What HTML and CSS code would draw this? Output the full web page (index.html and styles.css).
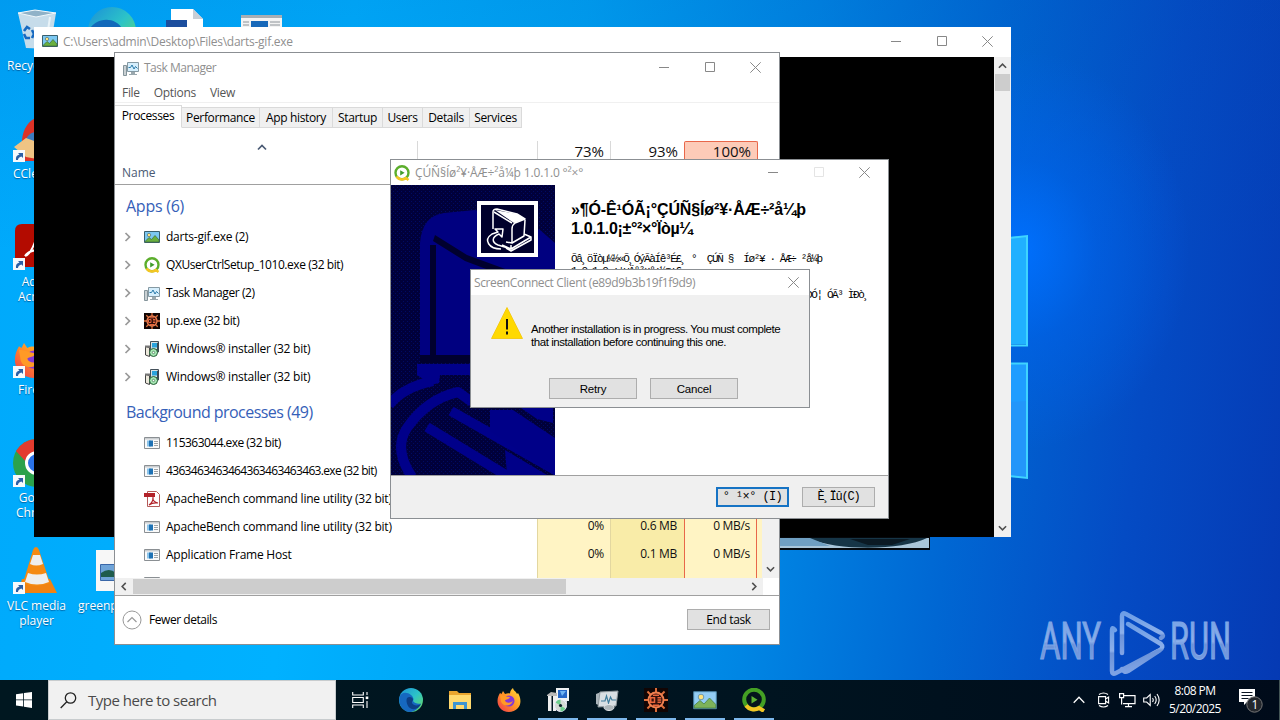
FILE: index.html
```html
<!DOCTYPE html>
<html lang="en">
<head>
<meta charset="utf-8">
<title>Desktop</title>
<link rel="stylesheet" href="styles.css">
</head>
<body>
<svg class="defs" width="0" height="0" aria-hidden="true">
  <defs>
    <linearGradient id="edgeg" x1="0" y1="0" x2="1" y2="1"><stop offset="0" stop-color="#1b8fd8"/><stop offset=".5" stop-color="#2cc3c8"/><stop offset="1" stop-color="#6fdc5a"/></linearGradient>
    <linearGradient id="ffg" x1="1" y1="0" x2="0" y2="1"><stop offset="0" stop-color="#ffe23b"/><stop offset=".5" stop-color="#ff9326"/><stop offset="1" stop-color="#f0314f"/></linearGradient>
    <linearGradient id="wmg" x1="0" y1="0" x2="0" y2="1"><stop offset="0" stop-color="#6d9ee6"/><stop offset=".5" stop-color="#8db0ea"/><stop offset=".55" stop-color="#6c93d9"/><stop offset="1" stop-color="#7fa3e4"/></linearGradient>
    <pattern id="dots" width="4" height="4" patternUnits="userSpaceOnUse"><rect width="4" height="4" fill="#00003a"/><rect width="1" height="1" fill="#000a62"/><rect x="2" y="2" width="1" height="1" fill="#000a62"/></pattern>
  </defs>
  <symbol id="i-pic" viewBox="0 0 16 16"><path d="M.5 2.500h15v11H.5z" fill="#7cc8f2" stroke="#39606f"/><circle cx="5" cy="6" r="1.700" fill="#ffe27a" stroke="#4c7180" stroke-width=".7"/><path d="M1 12.500l4-4 2.500 2L11 6.500l4 4.500v2H1z" fill="#69b03f" stroke="#3f6b3a" stroke-width=".7"/></symbol>
  <symbol id="i-pict" viewBox="0 0 24 24"><path d="M.7 3.700h22.600v17H.7z" fill="#93cdf4" stroke="#4d86a6" stroke-width="1"/><circle cx="8" cy="9" r="2.800" fill="#ffe27a" stroke="#6d98ac"/><path d="M1.200 20v-2.500L7 12.500l4 3.500 5.500-6 6.300 6.500V20z" fill="#7db35a" stroke="#4a8040" stroke-width=".8"/></symbol>
  <symbol id="i-q" viewBox="0 0 16 16"><circle cx="8" cy="7.800" r="6.500" fill="#fff" stroke="#5cae2c" stroke-width="2.400"/><path d="M2.500 11.500A6.500 6.500 0 0 0 12 13l2.500 2" fill="none" stroke="#f3c623" stroke-width="2.500"/><path d="M6.200 5.200v5.200L10.600 7.800z" fill="#3f9c2c"/></symbol>
  <symbol id="i-qt" viewBox="0 0 24 24"><circle cx="12" cy="11.500" r="9.800" fill="#04151c" stroke="#44a024" stroke-width="4"/><path d="M4 17.500A10 10 0 0 0 17 20l5 3" fill="none" stroke="#f3c623" stroke-width="4"/><path d="M9.500 8v7.500l6-3.700z" fill="#5cb332"/></symbol>
  <symbol id="i-tm" viewBox="0 0 16 16"><path d="M.5 5.500h3v10h-3z" fill="#c9d0d3" stroke="#84949b"/><path d="M4.500 2.500h11v9h-11z" fill="#d5eefc" stroke="#8599a3"/><path d="M5.500 7.500h2l1.500-2.500 2 4 1.500-2.500 2 2" fill="none" stroke="#2979a8"/><path d="M8 12h4v2h2v1H6v-1h2z" fill="#9aa8ae"/></symbol>
  <symbol id="i-up" viewBox="0 0 16 16"><path d="M0 0h16v16H0z" fill="#120504"/><path d="M8 0v16M0 8h16M2.300 2.300l11.400 11.400M13.700 2.300L2.300 13.700" stroke="#e0703c" stroke-width="1.300"/><circle cx="8" cy="8" r="5" fill="#32100b" stroke="#f08050" stroke-width="1.300"/><path d="M4.500 6.500h2.500v3H4.500zM9 6.500h2.500M9 8h2.500M9 9.500h2.500M6 11.500h4M6 4.800h4" fill="none" stroke="#e8653c" stroke-width="1"/></symbol>
  <symbol id="i-msi" viewBox="0 0 16 16"><path d="M6.500.5h8v8h-8z" fill="#d9e2e4" stroke="#44515a"/><path d="M8 2h5v4.500H8z" fill="#2aa3dc"/><path d="M13 2l2-1v10l-2 1z" fill="#3a4852"/><path d="M1.500 5.500l4 1v9l-4-1.500z" fill="#ede9dc" stroke="#444"/><path d="M1 4.500h5v2H1z" fill="#777"/><circle cx="9.500" cy="11.500" r="4" fill="#a6e8b4" stroke="#245c33"/><circle cx="9.500" cy="11.500" r="1.200" fill="#fff" stroke="#245c33" stroke-width=".6"/></symbol>
  <symbol id="i-msit" viewBox="0 0 24 24"><path d="M10 0h13v13H10z" fill="#eef1f2"/><path d="M12 2h9v8h-9z" fill="#2668c8"/><path d="M14 3h6l-4 5z" fill="#6fb4f2"/><path d="M12 13h9v3h-9z" fill="#cfd4d7"/><path d="M1 7l4-3 6 1v3H1z" fill="#b9b9b9"/><path d="M2 8h3.500v15H2zM7 8h3v15H7z" fill="#efefef"/><circle cx="14.500" cy="17.500" r="6" fill="#d5dbd6" stroke="#eef"/><path d="M14.500 17.500l-5-3a6 6 0 0 1 5-3zM14.500 17.500l5 3a6 6 0 0 1-5 3z" fill="#6fcf8e"/><circle cx="14.500" cy="17.500" r="1.600" fill="#10222a"/></symbol>
  <symbol id="i-app" viewBox="0 0 16 16"><path d="M.5 2.500h15v11H.5z" fill="#fafafa" stroke="#8a8f93"/><path d="M1 3h14v1.500H1z" fill="#c9cdd0"/><path d="M3 5.500h4v6H3z" fill="#8cc4ea"/><path d="M5 5.500h4v6H5z" fill="#1f72b4"/><path d="M10 6.500h4M10 8.500h4M10 10.500h4" stroke="#9ea4a8"/></symbol>
  <symbol id="i-pdf" viewBox="0 0 16 16"><path d="M3.500.5h9l3 3v12h-12z" fill="#fff" stroke="#b45a58"/><path d="M0 2h11v4H0z" fill="#b3222a"/><path d="M5 14c3-2 4.500-5.500 4-7.500-1 2 1.500 5 5 5.500-3-.5-7 .5-9 2z" fill="none" stroke="#b3222a" stroke-width="1.200"/></symbol>
  <symbol id="i-min" viewBox="0 0 11 11"><path d="M0 5.500h10" stroke="#888" fill="none"/></symbol>
  <symbol id="i-max" viewBox="0 0 11 11"><path d="M.5.5h9v9h-9z" stroke="currentColor" fill="none"/></symbol>
  <symbol id="i-x" viewBox="0 0 11 11"><path d="M.3.3l10.400 10.400M10.700.3L.3 10.700" stroke="#888" fill="none"/></symbol>
  <symbol id="i-chev" viewBox="0 0 8 8"><path d="M2 .8L5.200 4 2 7.200" fill="none" stroke="currentColor" stroke-width="1.400"/></symbol>
  <symbol id="i-link" viewBox="0 0 12 12"><path d="M0 0h12v12H0z" fill="#f6f9fc"/><path d="M3 10c-.5-3 .8-5 3.500-5.500L5 3h5v5L8.500 6.500C6.500 7 5 8 5 10z" fill="#2c5fa5"/></symbol>
  <symbol id="i-edge" viewBox="0 0 24 24"><circle cx="12" cy="12" r="12" fill="url(#edgeg)"/><path d="M.5 9C2 4 8 3.500 12 7c2.500 2.200 3 4 2 6 1.500 2.500 5 3 8 2.500C19 22 14 24 11 24 4 24-1 17 .5 9z" fill="#1668c0"/><path d="M8 10c2-2 6-1 6 1.500 0 1.500-1.500 2-1 3.500 1.500 3 6 3 9 1-3 7-11 6-13 2-1.500-3-2-6-1-8z" fill="#0c3f86"/></symbol>
  <symbol id="i-ff" viewBox="0 0 24 24"><path d="M3 5l1.500 1L6 3l2 3c2-1 4-1 5-.5C13 3 14.500 1 16 0c.5 3 3 3 4 6l1-1c3 5 3.500 11 0 15-5 5.500-14 5-18 0C-1 15 .5 9 3 5z" fill="url(#ffg)"/><circle cx="12" cy="13" r="5.500" fill="#8338d8"/><path d="M3 7c4 0 6 2 10 2-1 3-4 2-5 3.500 1 3 6 3 8 0-1 6-10 7-12 1z" fill="#ff9a26"/></symbol>
</svg>

<main class="desktop">
  <svg class="wallpaper" width="1280" height="720" viewBox="0 0 1280 720">
    <path d="M1011 237l16-1v108h-16z" fill="#20b0ff"/><path d="M1011 363h16v115l-16-2z" fill="#1f9dff"/><path d="M1011 402l16-1v76l-16-2z" fill="#2396fa"/>
    <path d="M1000 239l27-3v109.500h-27M1000 363.500h27V478l-27-3" fill="none" stroke="#3fd4ff" stroke-width="2"/>
    <path d="M780 537h150v13H780z" fill="#05080c"/><path d="M780 538h149v10H780z" fill="#a9c6da"/><path d="M806 538h121c-25 12-85 14-121 0z" fill="#163547"/><path d="M850 539h60l-18 6h-24z" fill="#0b1a24"/><path d="M780 538h30l20 8h-50z" fill="#6f9fc2"/>
  </svg>

  <!-- desktop shortcuts -->
  <svg class="deskicons" width="310" height="620" viewBox="0 0 310 620">
    <path d="M18 13l17-3 21 3-6 36-24-1z" fill="#c6dcea"/><path d="M18 13l17-3 21 3-20 4z" fill="#90b2c8" stroke="#eff7fb"/><path d="M50 17l-3 20" stroke="#e9f3f8" stroke-width="2"/><path d="M24 31l3-4 3 2M24 34l2 4h4M32 30l2 4-2 4" fill="none" stroke="#1769c0" stroke-width="2.600"/>
    <circle cx="112" cy="31" r="24" fill="url(#edgeg)"/><path d="M89 30c6-12 26-15 34 0z" fill="#1269ba"/>
    <path d="M171 9h22l10 10v10h-32z" fill="#fff"/><path d="M193 9v10h10z" fill="#c8ced5"/><path d="M166 20h21v9h-21z" fill="#1c4e9e"/>
    <path d="M241 15h41v13h-41z" fill="#f3f3f3"/><path d="M241 15h41v3h-41z" fill="#a7aeb4"/><path d="M251 21h17v8h-17z" fill="#1768b9"/><path d="M270 22h10M270 25h10M243 22h6M243 25h6" stroke="#8c9298"/>
    <path d="M22 140c1-12 7-19 15-23v44H24z" fill="#dd3227"/><path d="M26 139c3-6 7-7 11-7v14z" fill="#3c7bc0"/><path d="M14 147l12-9 11 4v17l-11-2z" fill="#efc484"/>
    <path d="M22 224h15v43H15v-36q0-7 7-7z" fill="#b30b00"/><path d="M25 256c4-1 7-6 10-14M25 256c2-4 6-5 11-6" fill="none" stroke="#fff" stroke-width="2"/>
    <svg x="14" y="338" width="40" height="40"><use href="#i-ff"/></svg>
    <circle cx="37" cy="463" r="24" fill="#2ba24c"/><path d="M16 451A24 24 0 0 1 37 439v24H27z" fill="#e33b2e"/><circle cx="37" cy="463" r="10.500" fill="#2a72e8" stroke="#fff" stroke-width="3"/>
    <path d="M22 579h28l7 14H18z" fill="#f18211"/><path d="M36 547q2 0 3 3l11 33q-14 6-27 0l10-33q1-3 3-3z" fill="#f58a12"/><path d="M33 555h7l3 9q-7 3-13 0zM28 573q9 3 18 0l3 9q-12 5-24 0z" fill="#eee"/>
    <path d="M96 550h20v41H96z" fill="#f7f7f7"/><path d="M100.500 564.500h16v16h-16z" fill="#6fa4d8" stroke="#3a67a8"/><path d="M101 573q8-6 15 0v4h-15z" fill="#1f5c4c"/>
    <svg x="13" y="150" width="12" height="12"><use href="#i-link"/></svg><svg x="13" y="258" width="12" height="12"><use href="#i-link"/></svg><svg x="13" y="366" width="12" height="12"><use href="#i-link"/></svg><svg x="13" y="475" width="12" height="12"><use href="#i-link"/></svg><svg x="13" y="582" width="12" height="12"><use href="#i-link"/></svg>
  </svg>
  <span class="lbl l1">Recycle Bin</span>
  <span class="lbl l2">CCleaner</span>
  <span class="lbl l3">Adobe<br>Acrobat</span>
  <span class="lbl l4">Firefox</span>
  <span class="lbl l5">Google<br>Chrome</span>
  <span class="lbl l6">VLC media<br>player</span>
  <span class="lbl l7">greenpaint</span>

  <svg class="watermark" width="220" height="74" viewBox="0 0 220 74">
    <text x="4" y="53" font-size="52" textLength="61" lengthAdjust="spacingAndGlyphs">ANY</text>
    <text x="134" y="53" font-size="52" textLength="61" lengthAdjust="spacingAndGlyphs">RUN</text>
    <g fill="none" stroke="url(#wmg)" stroke-width="4.500" stroke-linejoin="round" stroke-linecap="round"><path d="M79 24q-3-4-3 1v40q0 4 4 2l42-22"/><path d="M86 47V10q0-4 4-2l35 19q4 3 0 5"/><path d="M92 18l33 20q3 3-1 6L92 65q-4 2-6-2"/></g>
  </svg>

  <!-- image viewer -->
  <section class="win viewer">
    <header class="bar viewer-bar"><svg width="16" height="16"><use href="#i-pic"/></svg><span class="cap cap-path">C:\Users\admin\Desktop\Files\darts-gif.exe</span>
      <span class="ctl"><svg><use href="#i-min"/></svg><svg class="mx"><use href="#i-max"/></svg><svg><use href="#i-x"/></svg></span></header>
    <div class="viewer-body"><div class="black"></div>
      <div class="vs"><svg class="ar up"><use href="#i-chev"/></svg><i class="thumb"></i><svg class="ar dn"><use href="#i-chev"/></svg></div></div>
  </section>

  <!-- task manager -->
  <section class="win tm">
    <header class="bar tm-bar"><svg width="16" height="16"><use href="#i-tm"/></svg><span class="cap cap-tm">Task Manager</span>
      <span class="ctl"><svg><use href="#i-min"/></svg><svg class="mx"><use href="#i-max"/></svg><svg><use href="#i-x"/></svg></span></header>
    <nav class="menu"><span>File</span><span>Options</span><span>View</span></nav>
    <nav class="tabs"><span class="tab on">Processes</span><span class="tab t2">Performance</span><span class="tab t3">App history</span><span class="tab t4">Startup</span><span class="tab t5">Users</span><span class="tab t6">Details</span><span class="tab t7">Services</span></nav>
    <div class="cols"><div class="c-name"><svg class="sort"><use href="#i-chev"/></svg><span>Name</span></div><div class="c-stat"></div><div class="c-cpu">73%</div><div class="c-mem">93%</div><div class="c-disk">100%</div></div>
    <div class="mid">
      <div class="list">
        <h3 class="apps">Apps (6)</h3>
        <div class="row"><svg class="ch"><use href="#i-chev"/></svg><svg class="ic"><use href="#i-pic"/></svg><span>darts-gif.exe (2)</span></div>
        <div class="row"><svg class="ch"><use href="#i-chev"/></svg><svg class="ic"><use href="#i-q"/></svg><span class="setup">QXUserCtrlSetup_1010.exe (32 bit)</span></div>
        <div class="row"><svg class="ch"><use href="#i-chev"/></svg><svg class="ic"><use href="#i-tm"/></svg><span class="tight">Task Manager (2)</span></div>
        <div class="row"><svg class="ch"><use href="#i-chev"/></svg><svg class="ic"><use href="#i-up"/></svg><span class="tight">up.exe (32 bit)</span></div>
        <div class="row"><svg class="ch"><use href="#i-chev"/></svg><svg class="ic"><use href="#i-msi"/></svg><span>Windows® installer (32 bit)</span></div>
        <div class="row"><svg class="ch"><use href="#i-chev"/></svg><svg class="ic"><use href="#i-msi"/></svg><span>Windows® installer (32 bit)</span></div>
        <h3>Background processes (49)</h3>
        <div class="row"><svg class="ch"></svg><svg class="ic"><use href="#i-app"/></svg><span class="num">115363044.exe (32 bit)</span></div>
        <div class="row"><svg class="ch"></svg><svg class="ic"><use href="#i-app"/></svg><span class="digits">4363463463464363463463463.exe (32 bit)</span></div>
        <div class="row"><svg class="ch"></svg><svg class="ic"><use href="#i-pdf"/></svg><span>ApacheBench command line utility (32 bit)</span></div>
        <div class="row"><svg class="ch"></svg><svg class="ic"><use href="#i-app"/></svg><span>ApacheBench command line utility (32 bit)</span></div>
        <div class="row"><svg class="ch"></svg><svg class="ic"><use href="#i-app"/></svg><span>Application Frame Host</span></div>
        <div class="row"><svg class="ch"></svg><svg class="ic"><use href="#i-app"/></svg></div>
      </div>
      <div class="heat cpu"><span>0%</span><span>0%</span></div>
      <div class="heat mem"><span>0.6 MB</span><span>0.1 MB</span></div>
      <div class="heat disk"><span>0 MB/s</span><span>0 MB/s</span></div>
      <div class="heat net"></div>
      <div class="vs"><svg class="ar dn"><use href="#i-chev"/></svg></div>
    </div>
    <div class="hs"><svg class="ar lf"><use href="#i-chev"/></svg><i></i><svg class="ar rt"><use href="#i-chev"/></svg></div>
    <footer class="tm-foot"><svg width="20" height="20" viewBox="0 0 20 20"><circle cx="10" cy="10" r="9" fill="#fff" stroke="#999"/><path d="M5.500 12L10 7.500l4.500 4.500" fill="none" stroke="#999" stroke-width="1.200"/></svg><span class="fewer">Fewer details</span><span class="btn end">End task</span></footer>
  </section>

  <!-- installer wizard -->
  <section class="win wiz">
    <header class="bar wiz-bar"><svg width="16" height="16"><use href="#i-q"/></svg><span class="cap cap-wiz">ÇÚÑ§Íø²¥·ÅÆ÷²å¼þ 1.0.1.0 °²×°</span>
      <span class="ctl"><svg><use href="#i-min"/></svg><svg class="mx off"><use href="#i-max"/></svg><svg><use href="#i-x"/></svg></span></header>
    <div class="wiz-body">
      <svg class="art" width="164" height="290" viewBox="0 0 164 290">
        <rect width="164" height="290" fill="url(#dots)"/>
        <path d="M29 170V58q2-27 24-30l31-3 65 20 15 13v112z" fill="#000080"/>
        <path d="M42 56l32 20 90 34v-8L76 70 44 50zM39 60h6v110h-6z" fill="#00002e"/>
        <path d="M29 170h135v8H29z" fill="#00002e"/><path d="M26 179h138v11H49l-1 8-16 4v-8l-6-4z" fill="#00008a"/>
        <g fill="none" stroke="#00008a" stroke-width="10"><path d="M-2 220q14-18 44-24"/><path d="M21 292Q2 264 16 243q20-29 51-36l14 10" stroke-linejoin="round"/><path d="M60 226l106 60M36 242l82 50"/></g>
        <path d="M99 225h23l42 28v37l-65-44zM130 223h32v15l-16-4zM114 265l42 25h-40z" fill="#000088"/>
        <path d="M86 16h61v56H86z" fill="#fff"/><path d="M90 20h53v48H90z" fill="#00002c"/>
        <g fill="none" stroke="#fff" stroke-width="1.500" stroke-linejoin="round"><path d="M102 44V27q0-3 4-3l20 5 8 5-10 4q-3 2-3 6v14l-6-1"/><path d="M103 27l18 11M134 35l-1 16-12 7M133 49l7 3-20 12-9-4M120 64v-4M140 52v3l-20 11-5-3"/><path d="M110 64c-12 0-18-9-9-15l6-2-3-3h8l-1 8-3-3c-7 3-8 8-1 11l10 3"/></g><path d="M104 25l22 4 8 5-11 4z" fill="#fff"/>
      </svg>
      <div class="wiz-text">
        <h2><span class="h-a">»¶Ó-Ê¹ÓÃ¡°ÇÚÑ§Íø²¥·ÅÆ÷²å¼þ</span><br><span class="h-b">1.0.1.0¡±°²×°Ïòµ¼</span></h2>
        <p>Õâ¸öÏòµ¼½«Õ¸ÓýÃàÍê³É£¸ °&nbsp; ÇÚÑ §&nbsp; Íø²¥ · ÅÆ÷ ²å¼þ<br>1.0.1.0 ¡±µÄ°²×°¡¼¤¡£</p>
        <p class="p2">ÐÓ¦ ÓÃ³ ÌÐò¸</p>
      </div>
    </div>
    <footer class="wiz-foot"><span class="btn primary">° ¹×° (I)</span><span class="btn">È¸Ïû(C)</span></footer>
  </section>

  <!-- message box -->
  <section class="win dlg">
    <header class="bar dlg-bar"><span class="cap cap-dlg">ScreenConnect Client (e89d9b3b19f1f9d9)</span><span class="ctl"><svg><use href="#i-x"/></svg></span></header>
    <div class="dlg-msg"><svg width="34" height="34" viewBox="0 0 34 34"><path d="M17 1.500L32.500 32.500H1.500z" fill="#ffd900" stroke="#f3c400" stroke-width=".8"/><path d="M17 13v10.500M17 25.500v3" stroke="#111" stroke-width="2"/></svg>
      <p><span class="m1">Another installation is in progress. You must complete</span><br><span class="m2">that installation before continuing this one.</span></p></div>
    <div class="dlg-btns"><span class="btn">Retry</span><span class="btn">Cancel</span></div>
  </section>

  <footer class="taskbar">
    <div class="start"><svg width="16" height="16" viewBox="0 0 16 16"><path d="M0 2.300L7.200 1.200v6.300H0zM8 1.100L16 0v7.500H8zM0 8.300h7.200v6.300L0 13.500zM8 8.300h8V16l-8-1.200z" fill="#fff"/></svg></div>
    <div class="search"><svg width="17" height="17" viewBox="0 0 17 17"><circle cx="10.500" cy="6" r="5.200" fill="none" stroke="#222" stroke-width="1.300"/><path d="M6.800 9.800L.7 16" stroke="#222" stroke-width="1.300"/></svg><span>Type here to search</span></div>
    <div class="tv"><svg width="17" height="16" viewBox="0 0 17 16"><path d="M.7 0v3h10.600V0M.7 16v-3h10.600v3M.7 5.500h10.600v5H.7zM15 0v3M15 9v7" fill="none" stroke="#fff" stroke-width="1.100"/><path d="M13.700 4.500h2.600v2.600h-2.600z" fill="#fff"/></svg></div>
    <div class="task"><svg width="24" height="24"><use href="#i-edge"/></svg></div>
    <div class="task"><svg width="24" height="24" viewBox="0 0 24 24"><path d="M1 3h8l2 2h12v16H1z" fill="#e9a52e"/><path d="M1 7h22v14H1z" fill="#ffd96e"/><path d="M5 21v-7h14v7h-3v-4H8v4z" fill="#3d94d0"/></svg></div>
    <div class="task"><svg width="24" height="24"><use href="#i-ff"/></svg></div>
    <div class="task run"><svg width="24" height="24"><use href="#i-msit"/></svg></div>
    <div class="task run"><svg width="24" height="24" viewBox="0 0 24 24"><path d="M1 6l5-2v14l-5-2z" fill="#aab4ba"/><path d="M5 4l18-1-2 15-18 1z" fill="#d8dfe3" stroke="#8e989d"/><path d="M6 13h4l1.500-5 2 7 2-6 1.500 3h4" fill="none" stroke="#3e7c9b" stroke-width="1.200"/><ellipse cx="14" cy="19.500" rx="5" ry="3" fill="#aeb7bb" stroke="#e3e7e9"/></svg></div>
    <div class="task run"><svg width="24" height="24"><use href="#i-up"/></svg></div>
    <div class="task run"><svg width="24" height="24"><use href="#i-pict"/></svg></div>
    <div class="task run"><svg width="24" height="24"><use href="#i-qt"/></svg></div>
    <div class="tray">
      <svg width="12" height="8" viewBox="0 0 12 8"><path d="M.7 6.700L6 1.300l5.300 5.400" fill="none" stroke="#fff" stroke-width="1.300"/></svg>
      <svg class="cam" width="14" height="16" viewBox="0 0 14 16"><path d="M1.600 4.600h7v7h-7zM8.600 7l3-2v6l-3-2M2 2.500q4.500-3 9 0M2 13.500q4.500 3 9 0" fill="none" stroke="#fff" stroke-width="1.100"/></svg>
      <svg class="lan" width="17" height="15" viewBox="0 0 17 15"><path d="M5 2.600h11v8H4M9.500 11v2.500M6 13.600h7M.6.600h4v4h-4zM2.600 4.500v7" fill="none" stroke="#fff" stroke-width="1.200"/></svg>
      <svg class="vol" width="17" height="14" viewBox="0 0 17 14"><path d="M.7 5h3l3.500-3.500v11L3.700 9h-3zM9.500 5q1.500 2 0 4M11.700 3q3 4 0 8M14 1q4.300 6 0 12" fill="none" stroke="#fff" stroke-width="1.100"/></svg>
      <div class="clock"><span>8:08 PM</span><span class="date">5/20/2025</span></div>
      <svg class="note" width="24" height="26" viewBox="0 0 24 26"><path d="M0 2h16v13H8l-3 3v-3H0z" fill="#fff"/><path d="M2.500 5.500h11M2.500 8.500h11M2.500 11.500h7" stroke="#0a1422" stroke-width="1.200"/><circle cx="15.500" cy="17.500" r="7.700" fill="#23272d" stroke="#777"/><text x="12.500" y="22" font-size="12" fill="#fff">1</text></svg>
    </div>
  </footer>
</main>
</body>
</html>
```
FILE: styles.css
```css
* { box-sizing: border-box; }
body { margin: 0; font: 12px/15px "Open Sans", "Noto Sans", sans-serif; color: #111; overflow: hidden; }
.defs { position: absolute; }
h2, h3, p { margin: 0; font-weight: 400; }
span { white-space: nowrap; }
svg { display: block; flex: none; }

.desktop {
  position: relative; width: 1280px; height: 720px; overflow: hidden;
  background:
    radial-gradient(ellipse 170px 200px at 1020px 250px, rgba(0,112,255,.95), rgba(0,100,240,.5) 45%, rgba(0,90,220,0) 100%),
    linear-gradient(180deg, rgba(0,70,170,.14), rgba(0,90,200,0) 35%),
    linear-gradient(97deg, #00a9fb 0, #00b1ff 26%, #00a4f4 43%, #0086e4 60%, #0067d3 74%, #044bc4 87%, #0539b3 100%);
}
.wallpaper, .deskicons { position: absolute; left: 0; top: 0; }
.watermark { position: absolute; left: 1036px; top: 606px; overflow: visible; font-family: Roboto, sans-serif; fill: url(#wmg); }
.watermark text { stroke: #7fa5e6; stroke-width: 1.2px; }
.lbl { position: absolute; color: #fff; text-align: center; letter-spacing: 0; text-shadow: 0 1px 1px rgba(0,30,80,.5); }
.l1 { left: 7px; top: 58px; }
.l2 { left: 13px; top: 166px; }
.l3 { left: 18px; top: 274px; }
.l4 { left: 18px; top: 382px; }
.l5 { left: 16px; top: 490px; }
.l6 { left: 7px; top: 598px; }
.l7 { left: 78px; top: 598px; }

.win { position: absolute; display: flex; flex-direction: column; background: #fff; border: 1px solid #8b8f93; }
.bar { display: flex; align-items: center; flex: none; background: #fff; }
.cap { color: #8f8f8f; margin-left: 5px; flex: 1; }
.cap-path { letter-spacing: -.25px; }
.cap-tm { letter-spacing: -.5px; }
.cap-wiz { letter-spacing: -.15px; }
.ctl { display: flex; align-items: center; gap: 34px; color: #888; }
.ctl svg { width: 11px; height: 11px; margin-right: .6px; }
.ctl .off { color: #e4e4e4; }

.viewer { left: 34px; top: 27px; width: 977px; height: 510px; border: 0; }
.viewer-bar { height: 30px; padding: 0 17px 2px 8px; }
.viewer-body { display: flex; flex: 1; }
.black { flex: 1; background: #000; }
.vs { display: flex; flex-direction: column; align-items: center; width: 17px; background: #f0f0f0; padding: 4px 0; }
.thumb { width: 15px; height: 17px; background: #cdcdcd; margin-top: 4px; }
.ar { width: 9px; height: 9px; color: #505050; }
.up { transform: rotate(-90deg); }
.dn { transform: rotate(90deg); margin-top: auto; }
.lf { transform: rotate(180deg); }

.tm { left: 114px; top: 52px; width: 666px; height: 593px; }
.tm-bar { height: 29px; padding: 0 17px 0 8px; }
.menu { display: flex; gap: 14px; height: 21px; padding: 1px 7px; line-height: 19px; color: #555; letter-spacing: -.3px; border-bottom: 1px solid #f0f0f0; }
.tabs { display: flex; align-items: flex-end; height: 25px; }
.tab { height: 21px; line-height: 20px; background: #f0f0f0; border: 1px solid #dadada; border-left: 0; text-align: center; letter-spacing: -.35px; color: #000; }
.on { width: 67px; height: 23px; background: #fff; border-bottom-color: #fff; }
.t2 { width: 78px; } .t3 { width: 73px; } .t4 { width: 50px; } .t5 { width: 40px; } .t6 { width: 47px; } .t7 { width: 52px; }
.cols { display: flex; height: 57px; border-bottom: 1px solid #a0a0a0; padding-top: 13px; font-size: 15px; text-align: right; line-height: 21px; }
.cols > div { border-right: 1px solid #d9d9d9; padding-right: 6px; }
.cols > .c-name { width: 303px; text-align: left; display: flex; flex-direction: column; font-size: 12px; color: #4a5a74; }
.c-name span { margin: 10px 0 0 7px; }
.sort { width: 10px; height: 10px; transform: rotate(-90deg); margin: 1px 0 0 142px; }
.c-stat { width: 120px; } .c-cpu { width: 73px; }
.cols > .c-mem { width: 73px; border: 0; }
.cols > .c-disk { width: 74px; background: #fdcbb8; border: 1px solid #e8674a; border-bottom: 0; border-radius: 2px 2px 0 0; line-height: 19px; }

.mid { display: flex; height: 393px; overflow: hidden; }
.list { width: 422px; }
.list h3 { height: 38px; padding: 6px 0 0 11px; line-height: 30px; font-size: 16px; letter-spacing: -.54px; color: #3560b8; }
.list .apps { letter-spacing: -.26px; }
.row { display: flex; align-items: center; height: 28px; padding-left: 8px; letter-spacing: -.23px; color: #000; }
.row span { margin-top: -1px; }
.ch { width: 10px; height: 10px; color: #999; margin-right: 11px; }
.ic { width: 16px; height: 16px; margin-right: 6px; }
.setup { letter-spacing: -.44px; }
.tight { letter-spacing: -.4px; }
.num { letter-spacing: -.53px; }
.digits { letter-spacing: -.67px; }
.heat { display: flex; flex-direction: column; justify-content: flex-end; padding: 0 6px 10px 0; text-align: right; line-height: 28px; letter-spacing: -.3px; background: #fff4c4; }
.cpu { width: 74px; border-left: 1px solid #e3d7a0; border-right: 1px solid #e3d7a0; }
.mem { width: 74px; background: #f9eca8; border-right: 1px solid #e8674a; padding-right: 7px; }
.disk { width: 72px; border-right: 1px solid #e8674a; }
.net { width: 5px; padding: 0; }
.mid .vs { margin-left: auto; }
.hs { display: flex; align-items: center; height: 17px; width: 648px; background: #f0f0f0; padding: 0 4px; }
.hs i { width: 433px; height: 15px; background: #cdcdcd; margin: 0 auto 0 5px; }
.tm-foot { display: flex; align-items: center; flex: 1; border-top: 1px solid #a0a0a0; padding: 0 9px 1px 7px; }
.fewer { margin-left: 7px; flex: 1; letter-spacing: -.45px; color: #000; }
.btn { display: flex; justify-content: center; align-items: center; height: 21px; background: #e1e1e1; border: 1px solid #adadad; color: #000; }
.end { width: 83px; letter-spacing: -.35px; }

.wiz { left: 390px; top: 159px; width: 499px; height: 360px; }
.wiz-bar { height: 25px; padding: 0 17px 0 3px; }
.wiz-body { display: flex; height: 290px; }
.wiz-text { padding: 15px 0 0 16px; overflow: hidden; }
.wiz h2 { font: 700 16px/19px "Liberation Sans", Arial, sans-serif; color: #000; }
.h-a { letter-spacing: -.13px; }
.h-b { letter-spacing: -.35px; }
.wiz p { margin-top: 15px; font: 11px/12px "Liberation Mono", monospace; color: #000; letter-spacing: -1.38px; white-space: nowrap; }
.wiz .p2 { margin: 12px 0 0 235px; }
.wiz-foot { display: flex; justify-content: flex-end; align-items: flex-start; gap: 13px; flex: 1; background: #f0f0f0; border-top: 1px solid #a0a0a0; padding: 11px 13px; }
.wiz-foot .btn { width: 73px; height: 20px; font: 12px "Liberation Mono", monospace; letter-spacing: -1.2px; }
.wiz-foot .primary { border: 2px solid #1673c4; letter-spacing: -.6px; }

.dlg { left: 470px; top: 269px; width: 340px; height: 139px; background: #f0f0f0; }
.dlg-bar { height: 25px; padding: 0 9px 0 0; }
.cap-dlg { margin-left: 3px; letter-spacing: -.37px; }
.dlg-msg { display: flex; padding: 11px 0 0 19px; }
.dlg-msg p { font: 11.5px/13px "Liberation Sans", Arial, sans-serif; color: #000; margin: 17px 0 0 7px; letter-spacing: -.44px; }
.dlg-btns { display: flex; gap: 13px; padding: 29px 0 0 78px; }
.dlg-btns .btn { width: 88px; font: 11.5px "Liberation Sans", Arial, sans-serif; letter-spacing: -.2px; }

.taskbar { position: absolute; left: 0; top: 680px; width: 1280px; height: 40px; display: flex; background: linear-gradient(90deg, #001720, #001420 60%, #000b1a); color: #fff; }
.start { width: 48px; display: flex; align-items: center; justify-content: center; }
.search { width: 288px; background: #f1f1f1; border: 1px solid #c8ccce; display: flex; align-items: center; padding-left: 11px; color: #4a4a4a; font-size: 15px; }
.search span { margin-left: 11px; letter-spacing: -.5px; }
.tv { width: 50px; display: flex; align-items: center; justify-content: center; padding-right: 2px; }
.task { width: 49px; display: flex; align-items: center; justify-content: center; }
.run { background: linear-gradient(#7db8ec, #7db8ec) center bottom / 40px 2px no-repeat; }
.tray { flex: 1; display: flex; align-items: center; justify-content: flex-end; padding-right: 16px; border-right: 1px solid #455; }
.cam { margin-left: 12px; }
.lan { margin-left: 8px; }
.vol { margin-left: 7px; }
.clock { width: 56px; margin: 0 16px 0 7px; display: flex; flex-direction: column; align-items: center; line-height: 18px; letter-spacing: -.55px; }
```
